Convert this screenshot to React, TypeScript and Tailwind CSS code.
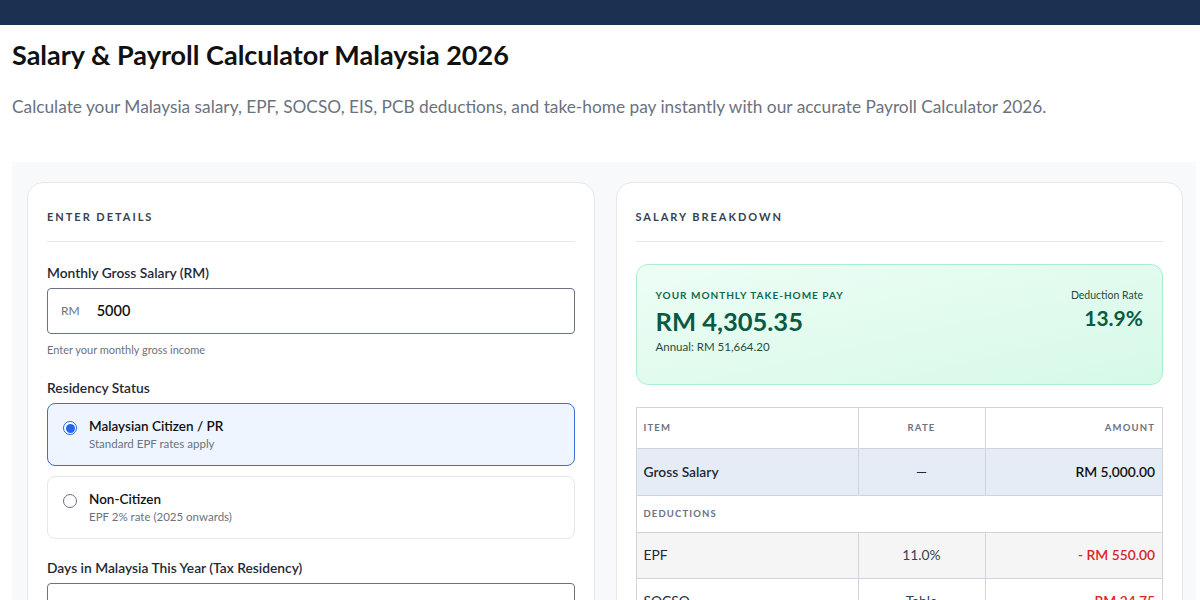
import React from "react";

export default function App() {
  return (
    <div className="w-[1200px] h-[600px] overflow-hidden bg-white text-[#1f2937]" style={{ fontFamily: "Lato, 'Noto Sans', sans-serif" }}>
      <div className="h-[25px] bg-[#1b3152]" />
      <div className="px-3">
        <h1 className="mt-[15px] text-[27px] leading-[30px] font-bold text-[#111]">Salary &amp; Payroll Calculator Malaysia 2026</h1>
        <p className="mt-[27px] text-[17.3px] leading-[20px] text-[#6b7280]">
          Calculate your Malaysia salary, EPF, SOCSO, EIS, PCB deductions, and take-home pay instantly with our accurate Payroll Calculator 2026.
        </p>
        <div className="mt-[45px] w-[1184px] bg-[#f8f9fb] pt-[20px] pl-[15px] pr-[13px] grid grid-cols-2 gap-[21px]">
          {/* Left card */}
          <div className="bg-white border border-[#e5e7eb] rounded-[16px] px-[19px] pt-[27px] h-[460px]">
            <div className="text-[11px] font-bold tracking-[0.18em] text-[#374151] leading-[14px]">ENTER DETAILS</div>
            <div className="mt-[17px] h-px bg-[#e5e7eb]" />
            <div className="mt-[22px] text-[13.8px] font-semibold text-[#1f2937] leading-[18px]">Monthly Gross Salary (RM)</div>
            <div className="mt-[6px] h-[46px] border border-[#6b7280] rounded-[4px] flex items-center px-[13px] gap-[17px]">
              <span className="text-[12px] text-[#6b7280]">RM</span>
              <span className="text-[14.5px] font-semibold text-[#111]">5000</span>
            </div>
            <div className="mt-[9px] text-[11px] text-[#6b7280] leading-[14px]">Enter your monthly gross income</div>
            <div className="mt-[22px] text-[13.8px] font-semibold text-[#1f2937] leading-[18px]">Residency Status</div>
            <div className="mt-[6px] h-[63px] rounded-[8px] border border-[#3b6fd4] bg-[#eef5ff] flex items-start px-[15px] pt-[14px] gap-[12px]">
              <span className="mt-[3px] w-[14px] h-[14px] rounded-full border border-[#2563eb] flex items-center justify-center bg-white">
                <span className="w-[9px] h-[9px] rounded-full bg-[#2563eb]" />
              </span>
              <div>
                <div className="text-[13.5px] font-semibold text-[#111] leading-[17px]">Malaysian Citizen / PR</div>
                <div className="text-[11.5px] text-[#6b7280] leading-[18px]">Standard EPF rates apply</div>
              </div>
            </div>
            <div className="mt-[10px] h-[63px] rounded-[8px] border border-[#e5e7eb] bg-white flex items-start px-[15px] pt-[14px] gap-[12px]">
              <span className="mt-[3px] w-[14px] h-[14px] rounded-full border border-[#6b7280] bg-white" />
              <div>
                <div className="text-[13.5px] font-semibold text-[#111] leading-[17px]">Non-Citizen</div>
                <div className="text-[11.5px] text-[#6b7280] leading-[18px]">EPF 2% rate (2025 onwards)</div>
              </div>
            </div>
            <div className="mt-[20px] text-[13.8px] font-semibold text-[#1f2937] leading-[18px]">Days in Malaysia This Year (Tax Residency)</div>
            <div className="mt-[6px] h-[46px] border border-[#6b7280] rounded-[4px] flex items-center px-[16px]">
              <span className="text-[14.5px] font-semibold text-[#111]">365</span>
            </div>
          </div>

          {/* Right card */}
          <div className="bg-white border border-[#e5e7eb] rounded-[16px] px-[19px] pt-[27px] h-[460px]">
            <div className="text-[11px] font-bold tracking-[0.18em] text-[#374151] leading-[14px]">SALARY BREAKDOWN</div>
            <div className="mt-[17px] h-px bg-[#e5e7eb]" />
            <div className="mt-[22px] h-[121px] rounded-[12px] border border-[#a7f0cf] bg-gradient-to-br from-[#edfdf5] to-[#d6f9e8] px-[19px] pt-[24px] flex justify-between">
              <div>
                <div className="text-[10px] font-bold tracking-[0.1em] text-[#0b6b4f] leading-[12px]">YOUR MONTHLY TAKE-HOME PAY</div>
                <div className="mt-[5px] text-[25.5px] font-bold text-[#0a5a43] leading-[30px]">RM 4,305.35</div>
                <div className="mt-[4px] text-[11.5px] text-[#1f4d3c] leading-[14px]">Annual: RM 51,664.20</div>
              </div>
              <div className="text-right">
                <div className="text-[10.5px] text-[#1f4d3c] leading-[12px]">Deduction Rate</div>
                <div className="mt-[4px] text-[21px] font-bold text-[#0a5a43] leading-[26px]">13.9%</div>
              </div>
            </div>
            <table className="mt-[22px] w-full border-collapse border border-[#d1d5db] text-[13.8px]">
              <colgroup>
                <col className="w-[222px]" />
                <col className="w-[127px]" />
                <col />
              </colgroup>
              <thead>
                <tr className="h-[41px] bg-white">
                  <th className="border border-[#d1d5db] px-[7px] text-left text-[9.5px] font-bold tracking-[0.12em] text-[#6b7280]">ITEM</th>
                  <th className="border border-[#d1d5db] px-[7px] text-center text-[9.5px] font-bold tracking-[0.12em] text-[#6b7280]">RATE</th>
                  <th className="border border-[#d1d5db] px-[7px] text-right text-[9.5px] font-bold tracking-[0.12em] text-[#6b7280]">AMOUNT</th>
                </tr>
              </thead>
              <tbody>
                <tr className="h-[47px] bg-[#e6ecf5]">
                  <td className="border border-[#d1d5db] px-[7px] font-semibold text-[#1f2937]">Gross Salary</td>
                  <td className="border border-[#d1d5db] px-[7px] text-center font-semibold">—</td>
                  <td className="border border-[#d1d5db] px-[7px] text-right font-semibold text-[#111]">RM 5,000.00</td>
                </tr>
                <tr className="h-[37px] bg-white">
                  <td colSpan={3} className="border border-[#d1d5db] px-[7px] text-[9.5px] font-bold tracking-[0.12em] text-[#6b7280]">DEDUCTIONS</td>
                </tr>
                <tr className="h-[46px] bg-[#f5f5f5]">
                  <td className="border border-[#d1d5db] px-[7px] text-[#1f2937]">EPF</td>
                  <td className="border border-[#d1d5db] px-[7px] text-center text-[#374151]">11.0%</td>
                  <td className="border border-[#d1d5db] px-[7px] text-right font-semibold text-[#dc2626]">- RM 550.00</td>
                </tr>
                <tr className="h-[46px] bg-white">
                  <td className="border border-[#d1d5db] px-[7px] text-[#1f2937]">SOCSO</td>
                  <td className="border border-[#d1d5db] px-[7px] text-center text-[#374151]">Table</td>
                  <td className="border border-[#d1d5db] px-[7px] text-right font-semibold text-[#dc2626]">- RM 24.75</td>
                </tr>
              </tbody>
            </table>
          </div>
        </div>
      </div>
    </div>
  );
}
